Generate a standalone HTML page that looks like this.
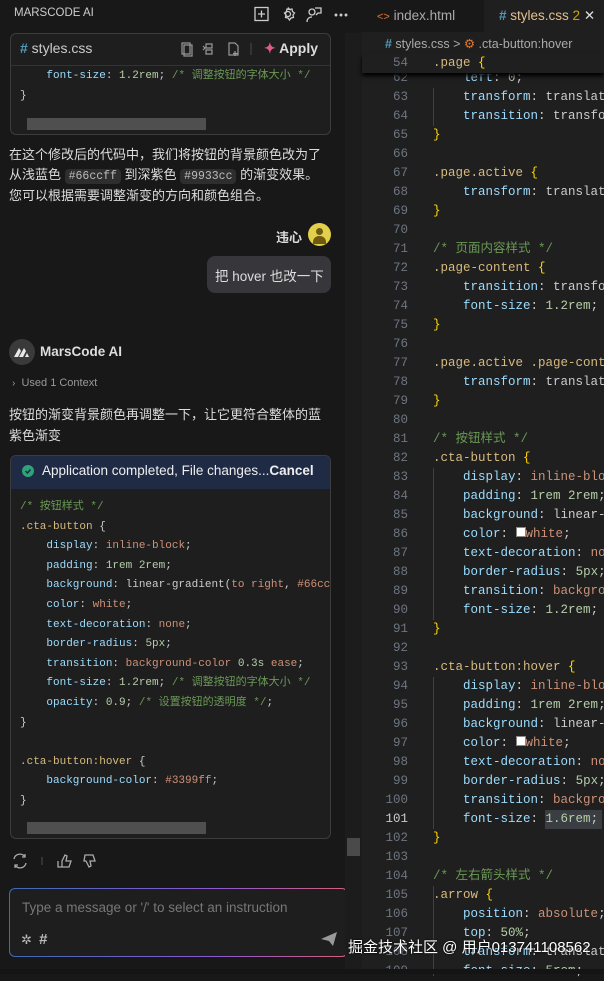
<!DOCTYPE html>
<html><head><meta charset="utf-8"><style>
*{margin:0;padding:0;box-sizing:border-box}
body{width:604px;height:974px;overflow:hidden;background:#181818;font-family:"Liberation Sans","Noto Sans CJK SC",sans-serif;color:#ccc;position:relative}
.a{position:absolute;white-space:nowrap}
.mono{font-family:"Liberation Mono","Noto Sans CJK SC",monospace}
.cm{color:#6a9955}.sel{color:#d7ba7d}.pr{color:#9cdcfe}.vl{color:#ce9178}.nm{color:#b5cea8}.br{color:#ffd700}.pu{color:#ccc}
.code2 div{height:19.6px;line-height:19.6px}
.ed div{height:19px;line-height:19px}
.chip{background:#2e2e2e;border-radius:4px;padding:1px 4px;font-family:"Liberation Mono",monospace;font-size:11.5px;color:#bbb}
</style></head><body>
<div class="a" style="left:14px;top:7px;font-size:11.5px;color:#ccc">MARSCODE AI</div>
<svg class="a" style="left:253px;top:6px" width="100" height="18" fill="none" stroke="#ccc" stroke-width="1.3">
<rect x="2" y="1.5" width="13" height="13"/><path d="M8.5 4.5v7M5 8h7"/>
<circle cx="35" cy="8" r="2.5"/><path d="M35 1.5l1.5 2 2.5-.5.5 2.5 2 1.5-1.5 2 .5 2.5-2.5.5-1.5 2-1.5-2-2.5-.5.5-2.5-1.5-2 2-1.5.5-2.5 2.5.5z"/>
<circle cx="59" cy="6" r="3"/><path d="M54 16c0-4 3-5 5-5M62 2h6v5h-3l-2 2"/>
<circle cx="83" cy="9" r=".8" fill="#ccc"/><circle cx="88" cy="9" r=".8" fill="#ccc"/><circle cx="93" cy="9" r=".8" fill="#ccc"/>
</svg>
<div class="a" style="left:10px;top:33px;width:321px;height:102px;border:1px solid #3c3c3c;border-radius:6px;background:#1e1e1e"></div>
<div class="a" style="left:11px;top:65px;width:319px;height:1px;background:#333"></div>
<div class="a" style="left:20px;top:40px;font-size:14px;color:#ccc"><span style="color:#519aba;font-weight:bold">#</span> styles.css</div>
<svg class="a" style="left:180px;top:41px" width="80" height="16" fill="none" stroke="#999" stroke-width="1.2"><rect x="2" y="2" width="8" height="11"/><rect x="4" y="4" width="8" height="11"/><path d="M26 3h6v4h-6zM26 9h6v4h-6zM23 5l2 2-2 2"/><path d="M49 2h6l3 3v9h-9z"/><path d="M55 10v5M53 12.5h5"/><path d="M71 2v12" stroke="#444"/></svg>
<div class="a" style="left:264px;top:40px;font-size:14px;font-weight:bold;color:#ddd"><span style="color:#e25a8c">✦</span> Apply</div>
<div class="a mono code2" style="left:20px;top:67px;font-size:11px"><div>&nbsp;&nbsp;&nbsp;&nbsp;<span class="pr">font-size</span>: <span class="nm">1.2rem</span>; <span class="cm">/* 调整按钮的字体大小 */</span></div><div>}</div></div>
<div class="a" style="left:27px;top:118px;width:179px;height:12px;background:#4f4f4f"></div>
<div class="a" style="left:9px;top:145px;font-size:13px;line-height:19.5px;color:#ddd;white-space:normal;width:318px">在这个修改后的代码中，我们将按钮的背景颜色改为了从浅蓝色 <span class="chip">#66ccff</span> 到深紫色 <span class="chip">#9933cc</span> 的渐变效果。您可以根据需要调整渐变的方向和颜色组合。</div>
<div class="a" style="left:276px;top:227px;font-size:13px;font-weight:bold;color:#ddd">违心</div>
<div class="a" style="left:308px;top:223px;width:23px;height:23px;border-radius:50%;background:#e3cf4c;overflow:hidden"><div style="position:absolute;left:8px;top:5px;width:7px;height:7px;border-radius:50%;background:#6b5a10"></div><div style="position:absolute;left:5px;top:13px;width:13px;height:8px;border-radius:6px 6px 0 0;background:#6b5a10"></div></div>
<div class="a" style="left:207px;top:256px;width:124px;height:37px;border-radius:8px;background:#37373b;font-size:13.5px;color:#ddd;padding:9px 0 0 8px">把 hover 也改一下</div>
<div class="a" style="left:9px;top:339px;width:26px;height:26px;border-radius:50%;background:#3a3a3a"></div>
<svg class="a" style="left:12px;top:345px" width="20" height="14"><path d="M2 12l5-9 2 3-3 6zM7 12l5-9 2 3-3 6zM13 12l2-4 2 4z" fill="#e8e8e8"/></svg>
<div class="a" style="left:40px;top:344px;font-size:13.5px;font-weight:bold;color:#ddd">MarsCode AI</div>
<div class="a" style="left:12px;top:377px;font-size:11px;color:#999"><span style="font-size:10px">›</span>&nbsp; Used 1 Context</div>
<div class="a" style="left:9px;top:404px;font-size:13px;line-height:21px;color:#ddd;white-space:normal;width:318px">按钮的渐变背景颜色再调整一下，让它更符合整体的蓝紫色渐变</div>
<div class="a" style="left:10px;top:455px;width:321px;height:384px;border:1px solid #3c3c3c;border-radius:6px;background:#1e1e1e;overflow:hidden"><div style="height:33px;background:#1f2a45"></div></div>
<div class="a" style="left:22px;top:465px;width:12px;height:12px;border-radius:50%;background:#2ea37a"></div>
<svg class="a" style="left:22px;top:465px" width="12" height="12"><path d="M3.5 6l2 2 3-3.5" stroke="#1f2a45" stroke-width="1.5" fill="none"/></svg>
<div class="a" style="left:42px;top:463px;font-size:13.5px;color:#eee">Application completed, File changes...<b>Cancel</b></div>
<div class="a mono code2" style="left:20px;top:498px;font-size:11px;color:#ccc">
<div class="cm">/* 按钮样式 */</div>
<div class="sel">.cta-button <span class="pu">{</span></div>
<div>&nbsp;&nbsp;&nbsp;&nbsp;<span class="pr">display</span>: <span class="vl">inline-block</span>;</div>
<div>&nbsp;&nbsp;&nbsp;&nbsp;<span class="pr">padding</span>: <span class="nm">1rem 2rem</span>;</div>
<div>&nbsp;&nbsp;&nbsp;&nbsp;<span class="pr">background</span>: linear-gradient(<span class="vl">to right</span>, <span class="vl">#66cc</span></div>
<div>&nbsp;&nbsp;&nbsp;&nbsp;<span class="pr">color</span>: <span class="vl">white</span>;</div>
<div>&nbsp;&nbsp;&nbsp;&nbsp;<span class="pr">text-decoration</span>: <span class="vl">none</span>;</div>
<div>&nbsp;&nbsp;&nbsp;&nbsp;<span class="pr">border-radius</span>: <span class="nm">5px</span>;</div>
<div>&nbsp;&nbsp;&nbsp;&nbsp;<span class="pr">transition</span>: <span class="vl">background-color</span> <span class="nm">0.3s</span> <span class="vl">ease</span>;</div>
<div>&nbsp;&nbsp;&nbsp;&nbsp;<span class="pr">font-size</span>: <span class="nm">1.2rem</span>; <span class="cm">/* 调整按钮的字体大小 */</span></div>
<div>&nbsp;&nbsp;&nbsp;&nbsp;<span class="pr">opacity</span>: <span class="nm">0.9</span>; <span class="cm">/* 设置按钮的透明度 */</span>;</div>
<div>}</div><div></div>
<div class="sel">.cta-button:hover <span class="pu">{</span></div>
<div>&nbsp;&nbsp;&nbsp;&nbsp;<span class="pr">background-color</span>: <span class="vl">#3399ff</span>;</div>
<div>}</div></div>
<div class="a" style="left:27px;top:822px;width:179px;height:12px;background:#4f4f4f"></div>
<svg class="a" style="left:11px;top:851px" width="95" height="20" fill="none" stroke="#aaa" stroke-width="1.3"><path d="M3 8a6 6 0 0 1 11-2M15 12a6 6 0 0 1-11 2M14 3v3h-3M4 17v-3h3"/><path d="M31 6v8" stroke="#444"/><path d="M47 10v6h4M51 16h7l2-6h-5l1-5-2-1-3 6v6"/><path d="M74 4h8l2 6h-5l1 5-2 1-3-6H73z"/></svg>
<div class="a" style="left:9px;top:888px;width:339px;height:69px;border-radius:6px;background:linear-gradient(90deg,#3d6bb5,#8a5ad0 60%,#d2607a);padding:1px"><div style="width:100%;height:100%;background:#1e1e1f;border-radius:5px"></div></div>
<div class="a" style="left:22px;top:900px;font-size:13.5px;color:#777">Type a message or '/' to select an instruction</div>
<div class="a" style="left:21px;top:931px;font-size:13px;color:#bbb">✲ &nbsp;<b style="font-size:15px">#</b></div>
<svg class="a" style="left:320px;top:931px" width="18" height="16"><path d="M1 8l16-7-4 14-4-5z" fill="#999"/></svg>
<div class="a" style="left:345px;top:33px;width:17px;height:936px;background:#1c1c1c"></div>
<div class="a" style="left:347px;top:838px;width:13px;height:18px;background:#4a4a4a"></div>
<div class="a" style="left:362px;top:0;width:242px;height:974px;background:#1f1f1f"></div>
<div class="a" style="left:362px;top:0;width:122px;height:32px;background:#181818"></div>
<div class="a" style="left:377px;top:8px;font-size:13.5px;color:#aaa"><span style="color:#e37933;font-size:11px">&lt;&gt;</span> index.html</div>
<div class="a" style="left:499px;top:8px;font-size:13.5px;color:#e2c08d"><span style="color:#519aba;font-weight:bold">#</span> styles.css <span style="color:#cca700">2</span> <span style="color:#ddd">✕</span></div>
<div class="a" style="left:385px;top:36px;font-size:12.5px;color:#aaa"><span style="color:#519aba;font-weight:bold">#</span> styles.css &gt; <span style="color:#e37933">⚙</span> .cta-button:hover</div>
<div class="a mono" style="left:362px;top:69px;width:46px;text-align:right;color:#6e7681;font-size:12.5px;line-height:19px">
62<br>63<br>64<br>65<br>66<br>67<br>68<br>69<br>70<br>71<br>72<br>73<br>74<br>75<br>76<br>77<br>78<br>79<br>80<br>81<br>82<br>83<br>84<br>85<br>86<br>87<br>88<br>89<br>90<br>91<br>92<br>93<br>94<br>95<br>96<br>97<br>98<br>99<br>100<br><span style="color:#ccc">101</span><br>102<br>103<br>104<br>105<br>106<br>107<br>108<br>109</div>
<div class="a" style="left:433px;top:88px;width:1px;height:38px;background:#404040"></div>
<div class="a" style="left:433px;top:468px;width:1px;height:152px;background:#404040"></div>
<div class="a" style="left:433px;top:677px;width:1px;height:152px;background:#404040"></div>
<div class="a" style="left:433px;top:886px;width:1px;height:90px;background:#404040"></div>
<div class="a" style="left:545px;top:810px;width:57px;height:19px;background:#3a3d41"></div>
<div class="a mono ed" style="left:433px;top:69px;font-size:12.5px;color:#ccc">
<div>&nbsp;&nbsp;&nbsp;&nbsp;<span class="pr">left</span>: <span class="nm">0</span>;</div>
<div>&nbsp;&nbsp;&nbsp;&nbsp;<span class="pr">transform</span>: translat</div>
<div>&nbsp;&nbsp;&nbsp;&nbsp;<span class="pr">transition</span>: transfo</div>
<div class="br">}</div><div></div>
<div class="sel">.page.active <span class="br">{</span></div>
<div>&nbsp;&nbsp;&nbsp;&nbsp;<span class="pr">transform</span>: translat</div>
<div class="br">}</div><div></div>
<div class="cm">/* 页面内容样式 */</div>
<div class="sel">.page-content <span class="br">{</span></div>
<div>&nbsp;&nbsp;&nbsp;&nbsp;<span class="pr">transition</span>: transfor</div>
<div>&nbsp;&nbsp;&nbsp;&nbsp;<span class="pr">font-size</span>: <span class="nm">1.2rem</span>;</div>
<div class="br">}</div><div></div>
<div class="sel">.page.active .page-cont</div>
<div>&nbsp;&nbsp;&nbsp;&nbsp;<span class="pr">transform</span>: translat</div>
<div class="br">}</div><div></div>
<div class="cm">/* 按钮样式 */</div>
<div class="sel">.cta-button <span class="br">{</span></div>
<div>&nbsp;&nbsp;&nbsp;&nbsp;<span class="pr">display</span>: <span class="vl">inline-blo</span></div>
<div>&nbsp;&nbsp;&nbsp;&nbsp;<span class="pr">padding</span>: <span class="nm">1rem 2rem</span>;</div>
<div>&nbsp;&nbsp;&nbsp;&nbsp;<span class="pr">background</span>: linear-</div>
<div>&nbsp;&nbsp;&nbsp;&nbsp;<span class="pr">color</span>: <span style="display:inline-block;width:10px;height:10px;background:#fff;border:1px solid #888"></span><span class="vl">white</span>;</div>
<div>&nbsp;&nbsp;&nbsp;&nbsp;<span class="pr">text-decoration</span>: <span class="vl">no</span></div>
<div>&nbsp;&nbsp;&nbsp;&nbsp;<span class="pr">border-radius</span>: <span class="nm">5px</span>;</div>
<div>&nbsp;&nbsp;&nbsp;&nbsp;<span class="pr">transition</span>: <span class="vl">backgro</span></div>
<div>&nbsp;&nbsp;&nbsp;&nbsp;<span class="pr">font-size</span>: <span class="nm">1.2rem</span>;</div>
<div class="br">}</div><div></div>
<div class="sel">.cta-button:hover <span class="br">{</span></div>
<div>&nbsp;&nbsp;&nbsp;&nbsp;<span class="pr">display</span>: <span class="vl">inline-blo</span></div>
<div>&nbsp;&nbsp;&nbsp;&nbsp;<span class="pr">padding</span>: <span class="nm">1rem 2rem</span>;</div>
<div>&nbsp;&nbsp;&nbsp;&nbsp;<span class="pr">background</span>: linear-</div>
<div>&nbsp;&nbsp;&nbsp;&nbsp;<span class="pr">color</span>: <span style="display:inline-block;width:10px;height:10px;background:#fff;border:1px solid #888"></span><span class="vl">white</span>;</div>
<div>&nbsp;&nbsp;&nbsp;&nbsp;<span class="pr">text-decoration</span>: <span class="vl">no</span></div>
<div>&nbsp;&nbsp;&nbsp;&nbsp;<span class="pr">border-radius</span>: <span class="nm">5px</span>;</div>
<div>&nbsp;&nbsp;&nbsp;&nbsp;<span class="pr">transition</span>: <span class="vl">backgro</span></div>
<div>&nbsp;&nbsp;&nbsp;&nbsp;<span class="pr">font-size</span>: <span class="nm">1.6rem</span>;</div>
<div class="br">}</div><div></div>
<div class="cm">/* 左右箭头样式 */</div>
<div class="sel">.arrow <span class="br">{</span></div>
<div>&nbsp;&nbsp;&nbsp;&nbsp;<span class="pr">position</span>: <span class="vl">absolute</span>;</div>
<div>&nbsp;&nbsp;&nbsp;&nbsp;<span class="pr">top</span>: <span class="nm">50%</span>;</div>
<div>&nbsp;&nbsp;&nbsp;&nbsp;<span class="pr">transform</span>: translat</div>
<div>&nbsp;&nbsp;&nbsp;&nbsp;<span class="pr">font-size</span>: <span class="nm">5rem</span>;</div>
</div>
<div class="a" style="left:362px;top:54px;width:242px;height:19px;background:#1f1f1f;box-shadow:0 3px 4px #000"></div>
<div class="a mono" style="left:362px;top:54px;width:46px;text-align:right;color:#6e7681;font-size:12.5px;line-height:19px">54</div>
<div class="a mono" style="left:433px;top:54px;font-size:12.5px;line-height:19px"><span class="sel">.page</span> <span class="br">{</span></div>
<div class="a" style="left:348px;top:936px;font-size:15px;color:#fff;text-shadow:0 0 2px #000">掘金技术社区 @ 用户013741108562</div>
<div class="a" style="left:0;top:969px;width:604px;height:5px;background:#141414"></div>
</body></html>
